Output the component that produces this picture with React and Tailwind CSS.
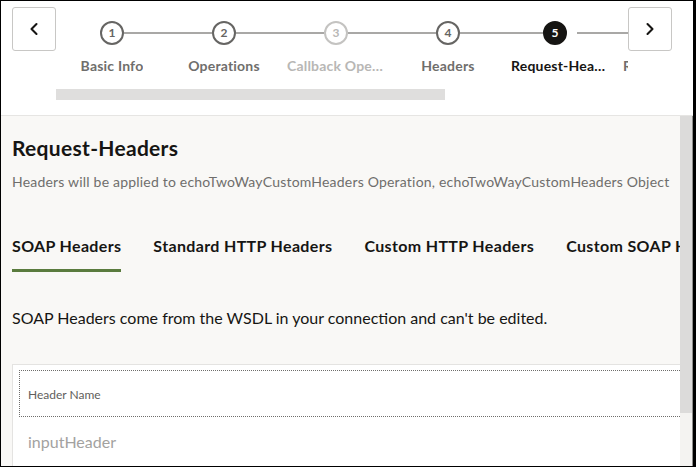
import { ChevronLeft, ChevronRight } from "lucide-react";

const steps = [
  { n: 1, label: "Basic Info", state: "done" },
  { n: 2, label: "Operations", state: "done" },
  { n: 3, label: "Callback Operations", state: "disabled" },
  { n: 4, label: "Headers", state: "done" },
  { n: 5, label: "Request-Headers", state: "active" },
  { n: 6, label: "Response-Headers", state: "todo" },
  { n: 7, label: "Summary", state: "todo" },
];

const tabs = ["SOAP Headers", "Standard HTTP Headers", "Custom HTTP Headers", "Custom SOAP Headers"];

const Step = ({ step, first, last }) => {
  const circle =
    step.state === "active"
      ? "bg-[#161513] border-[#161513] text-white"
      : step.state === "disabled"
      ? "bg-white border-[#c4c3c1] text-[#b8b7b5]"
      : "bg-white border-[#666563] text-[#666563]";
  const label =
    step.state === "active"
      ? "text-[#161513]"
      : step.state === "disabled"
      ? "text-[#b8b7b5]"
      : "text-[#6f6e6c]";
  return (
    <div className="w-[112px] shrink-0 flex flex-col items-center">
      <div className="w-full flex items-center">
        <div className={`flex-1 h-[2px] ${first ? "" : "bg-[#a9a8a6]"}`} />
        <div className={`w-[24px] h-[24px] rounded-full border-2 flex items-center justify-center text-[12px] font-bold ${circle}`}>
          {step.n}
        </div>
        <div className={`flex-1 h-[2px] ${last ? "" : "bg-[#a9a8a6]"} ${step.state === "active" ? "ml-[10px]" : ""}`} />
      </div>
      <div className={`mt-[12px] max-w-[98px] truncate text-[14px] leading-[18px] font-bold tracking-[0.2px] ${label}`}>
        {step.label}
      </div>
    </div>
  );
};

const App = () => {
  return (
    <div
      className="w-[696px] h-[467px] overflow-hidden border border-black border-r-[3px] flex flex-col bg-white"
      style={{ fontFamily: "Lato, 'Noto Sans', sans-serif" }}
    >
      {/* wizard header */}
      <div className="h-[115px] shrink-0 bg-white border-b border-[#e6e5e3] flex items-start pl-[11px] pt-[6px]">
        <button className="w-[44px] h-[44px] shrink-0 rounded-[3px] border border-[#c8c7c5] bg-white flex items-center justify-center text-[#161513]">
          <ChevronLeft size={20} strokeWidth={2.5} />
        </button>
        <div className="w-[572px] shrink-0 overflow-hidden">
          <div className="flex mt-[14px]">
            {steps.map((s, i) => (
              <Step key={s.n} step={s} first={i === 0} last={i === steps.length - 1} />
            ))}
          </div>
          <div className="mt-[14px] w-[389px] h-[11px] bg-[#dfdedd]" />
        </div>
        <button className="w-[44px] h-[44px] shrink-0 rounded-[3px] border border-[#c8c7c5] bg-white flex items-center justify-center text-[#161513]">
          <ChevronRight size={20} strokeWidth={2.5} />
        </button>
      </div>

      {/* body */}
      <div className="flex-1 flex min-h-0">
        <div className="flex-1 min-w-0 bg-[#f9f8f6] overflow-hidden flex flex-col">
          <div className="pl-[11px] pt-[19px]">
            <h1 className="text-[21px] leading-[26px] font-bold tracking-[0.3px] text-[#161513]">Request-Headers</h1>
            <p className="mt-[12px] text-[14px] leading-[18px] tracking-[0.2px] text-[#6f6e6c] whitespace-nowrap">
              Headers will be applied to echoTwoWayCustomHeaders Operation, echoTwoWayCustomHeaders Object
            </p>
          </div>

          <div className="pl-[11px] mt-[45px] flex gap-[32px] whitespace-nowrap">
            {tabs.map((t, i) => (
              <div key={t} className="flex flex-col">
                <span className="text-[16px] leading-[20px] font-bold tracking-[0.35px] text-[#161513]">{t}</span>
                <div className={`mt-[13px] h-[3px] ${i === 0 ? "bg-[#5a7b3e]" : ""}`} />
              </div>
            ))}
          </div>

          <p className="pl-[11px] mt-[36px] text-[16px] leading-[20px] text-[#161513] whitespace-nowrap">
            SOAP Headers come from the WSDL in your connection and can't be edited.
          </p>

          <div className="ml-[11px] mt-[36px] flex-1 bg-white border-l border-t border-[#e4e3e1] pl-[6px] pt-[5px]">
            <div className="h-[47px] border border-dotted border-[#6f6e6c] border-r-0 flex items-center pl-[8px] pt-[3px]">
              <span className="text-[12px] text-[#5f5e5c]">Header Name</span>
            </div>
            <div className="pl-[9px] pt-[15px] text-[16px] leading-[20px] text-[#a3a29f]">inputHeader</div>
          </div>
        </div>

        {/* scrollbar */}
        <div className="w-[13px] shrink-0 flex flex-col border-r border-[#8f8e8c]">
          <div className="h-[297px] bg-[#dcdbda]" />
          <div className="flex-1 bg-[#f4f3f1]" />
        </div>
      </div>
    </div>
  );
};

export default App;
